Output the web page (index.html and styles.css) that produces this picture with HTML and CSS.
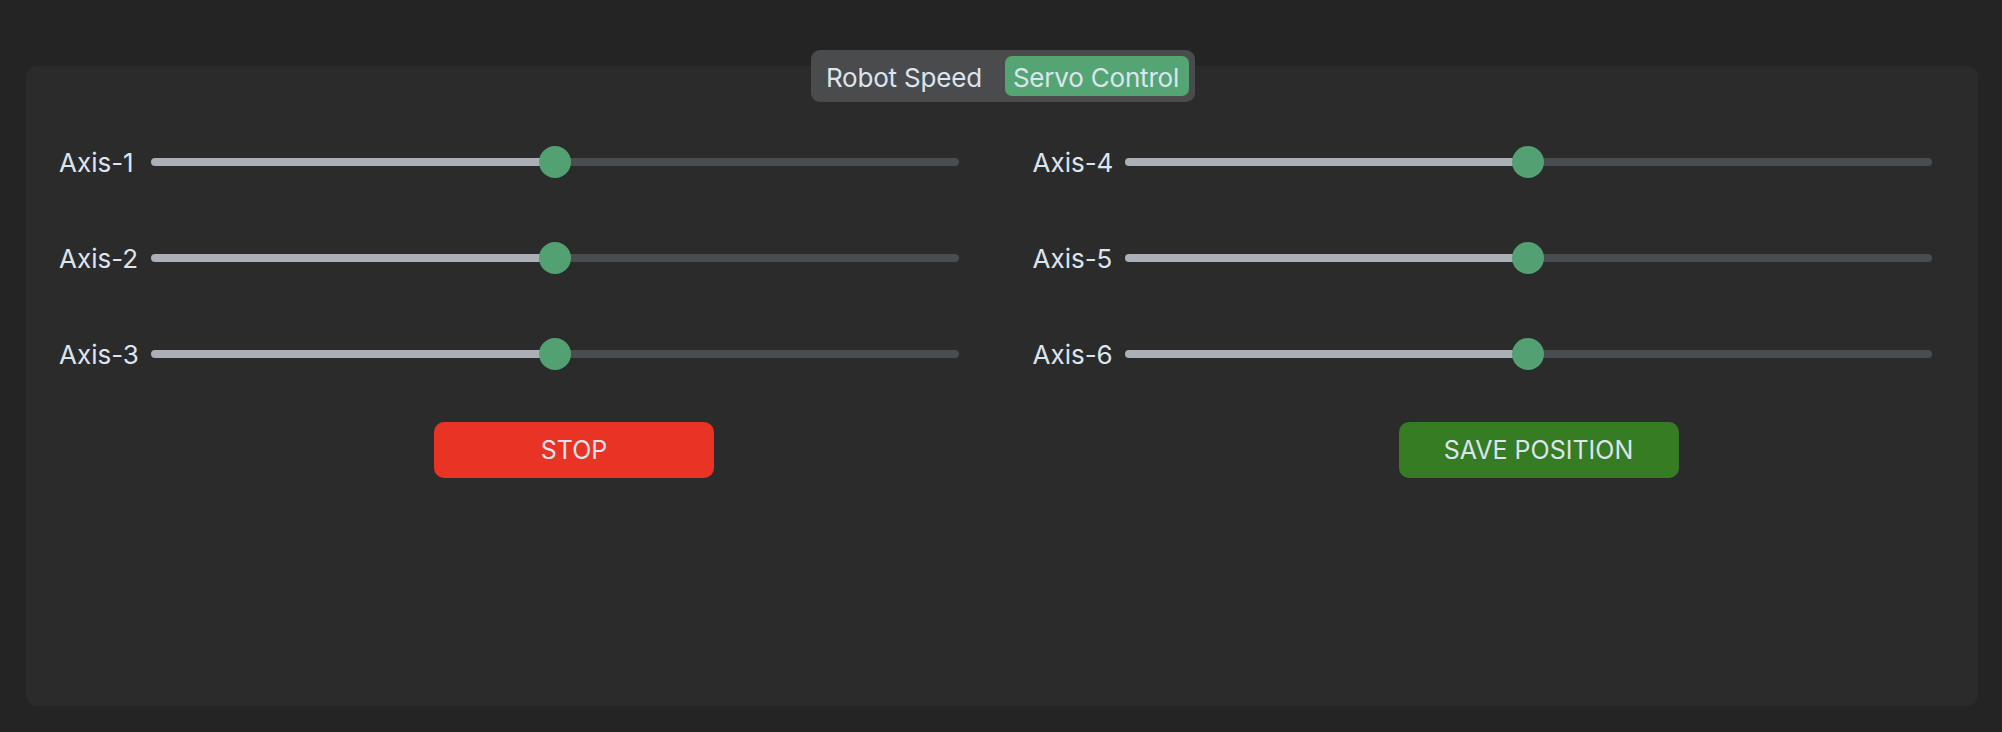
FILE: index.html
```html
<!DOCTYPE html>
<html>
<head>
<meta charset="utf-8">
<link rel="stylesheet" href="styles.css">
</head>
<body>
<div class="app">
  <div class="tabbar">
    <div class="segmented">
      <div class="seg">Robot Speed</div>
      <div class="seg seg-active">Servo Control</div>
    </div>
  </div>
  <div class="panel">
    <div class="columns">
      <div class="col">
        <div class="row"><span class="label">Axis-1</span><div class="slider"><div class="thumb" style="left:50%"></div></div></div>
        <div class="row"><span class="label">Axis-2</span><div class="slider"><div class="thumb" style="left:50%"></div></div></div>
        <div class="row"><span class="label">Axis-3</span><div class="slider"><div class="thumb" style="left:50%"></div></div></div>
        <div class="btn-row btn-row-left"><button class="btn btn-stop">STOP</button></div>
      </div>
      <div class="col">
        <div class="row"><span class="label">Axis-4</span><div class="slider"><div class="thumb" style="left:50%"></div></div></div>
        <div class="row"><span class="label">Axis-5</span><div class="slider"><div class="thumb" style="left:50%"></div></div></div>
        <div class="row"><span class="label">Axis-6</span><div class="slider"><div class="thumb" style="left:50%"></div></div></div>
        <div class="btn-row btn-row-right"><button class="btn btn-save">SAVE POSITION</button></div>
      </div>
    </div>
  </div>
</div>
</body>
</html>
```
FILE: styles.css
```css
* { box-sizing: border-box; }
html, body {
  margin: 0;
  padding: 0;
  background: #242424;
  width: 2002px;
  height: 732px;
  overflow: hidden;
  font-family: "Inter", "Roboto", "Liberation Sans", sans-serif;
  color: #dce4ee;
}
.app {
  padding: 50px 24px 26px 26px;
  height: 732px;
  display: flex;
  flex-direction: column;
}
.tabbar {
  display: flex;
  justify-content: center;
  margin-bottom: -36px;
  position: relative;
  z-index: 1;
  padding-left: 2px;
}
.segmented {
  display: flex;
  align-items: center;
  height: 52px;
  padding: 6px 6px 6px 15px;
  background: #4a4b4d;
  border-radius: 9px;
}
.seg {
  height: 40px;
  display: flex;
  align-items: center;
  font-size: 26px;
  letter-spacing: -0.2px;
  padding: 2px 8px 0 0;
  margin-right: 15px;
}
.seg-active {
  margin-right: 0;
  padding: 2px 10px 0 8px;
  background: #55a474;
  border-radius: 7px;
}
.panel {
  flex: 1;
  background: #2b2b2b;
  border-radius: 11px;
  padding: 80px 46px 0 33px;
}
.columns {
  display: grid;
  grid-template-columns: 1fr 1fr;
  column-gap: 74px;
}
.col {
  display: flex;
  flex-direction: column;
  gap: 64px;
}
.row {
  display: flex;
  align-items: center;
  height: 32px;
}
.label {
  width: 92px;
  flex: none;
  font-size: 26px;
}
.slider {
  flex: 1;
  height: 8px;
  border-radius: 4px;
  background: linear-gradient(to right, #aab0b5 0, #aab0b5 50%, #4a4d50 50%, #4a4d50 100%);
  position: relative;
}
.thumb {
  position: absolute;
  top: 50%;
  width: 32px;
  height: 32px;
  border-radius: 50%;
  background: #53a173;
  transform: translate(-50%, -50%);
}
.btn-row {
  display: flex;
  margin-top: -12px;
}
.btn-row-left { padding-left: 375px; }
.btn-row-right { padding-left: 366px; }
.btn {
  width: 280px;
  height: 56px;
  border: none;
  border-radius: 10px;
  font-family: inherit;
  font-size: 25px;
  color: #dce4ee;
  display: flex;
  align-items: center;
  justify-content: center;
  padding: 0;
}
.btn-stop { background: #e93324; }
.btn-save { background: #367c22; }
```
